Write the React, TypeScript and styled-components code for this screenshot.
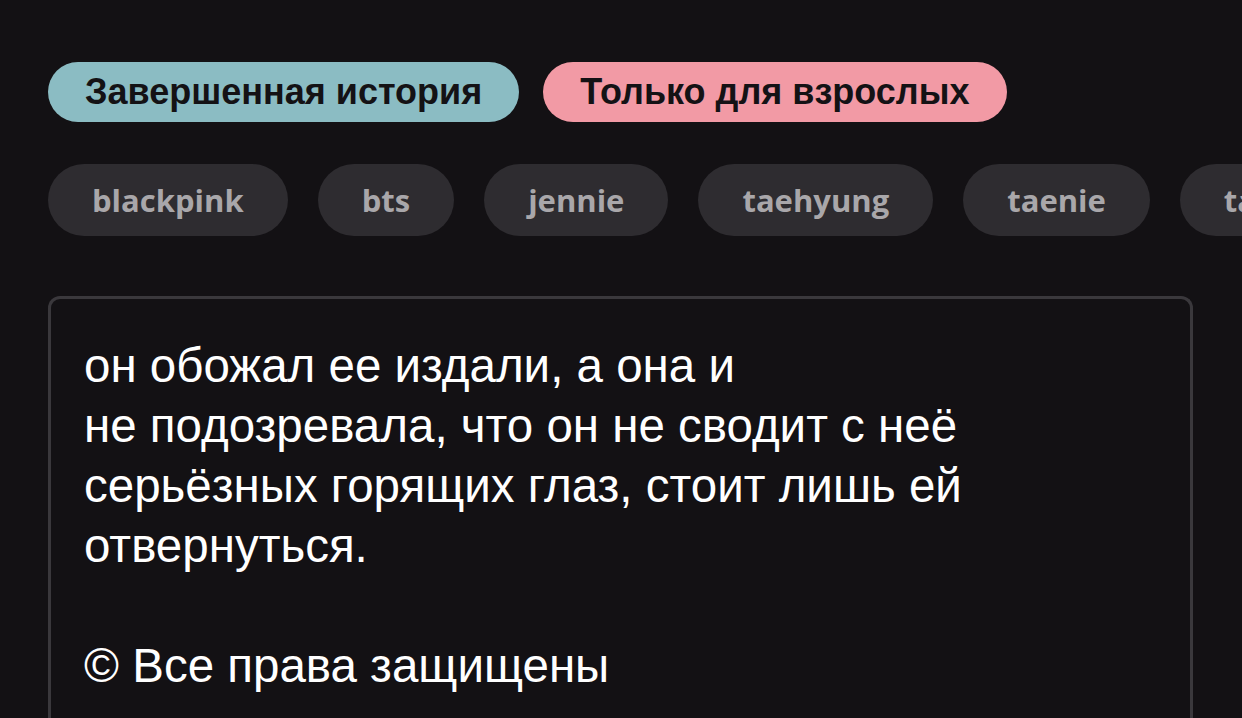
import React from 'react'
import styled, {createGlobalStyle} from "styled-components";

const GlobalStyle = createGlobalStyle`
  html, body {
    margin: 0;
    padding: 0;
    background: #131114;
    overflow: hidden;
  }
`
const Page = styled.div`
  width: 1242px;
  height: 718px;
  overflow: hidden;
  padding: 62px 0 0 48px;
  box-sizing: border-box;
  background: #131114;
`
const BadgeRow = styled.div`
  display: flex;
  gap: 24px;
`
const Badge = styled.div<{ $bg: string }>`
  height: 60px;
  padding: 0 37px;
  border-radius: 30px;
  background: ${p => p.$bg};
  color: #141215;
  font-family: "Liberation Sans", Arial, sans-serif;
  font-weight: 700;
  font-size: 36px;
  display: flex;
  align-items: center;
  white-space: nowrap;
`
const TagRow = styled.div`
  display: flex;
  gap: 30px;
  margin-top: 42px;
  white-space: nowrap;
`
const Tag = styled.div`
  flex-shrink: 0;
  height: 72px;
  padding: 0 44px;
  border-radius: 36px;
  background: #2e2c30;
  color: #a9a7aa;
  font-family: "Open Sans", sans-serif;
  font-weight: 700;
  font-size: 31px;
  display: flex;
  align-items: center;
`
const Description = styled.div`
  margin-top: 60px;
  width: 1145px;
  box-sizing: border-box;
  border: 3px solid #3a383c;
  border-bottom: none;
  border-radius: 12px 12px 0 0;
  padding: 37px 33px;
  color: #ffffff;
  font-family: "Liberation Sans", Arial, sans-serif;
  font-size: 47.5px;
  line-height: 60px;
  white-space: pre-line;
`

const tags = ["blackpink", "bts", "jennie", "taehyung", "taenie", "taekook"]

const text = `он обожал ее издали, а она и
не подозревала, что он не сводит с неё
серьёзных горящих глаз, стоит лишь ей
отвернуться.

© Все права защищены`

const App = () => {
    return (
        <Page>
            <GlobalStyle/>
            <BadgeRow>
                <Badge $bg="#8bbcc3">Завершенная история</Badge>
                <Badge $bg="#f29aa5">Только для взрослых</Badge>
            </BadgeRow>
            <TagRow>
                {tags.map(tag => <Tag key={tag}>{tag}</Tag>)}
            </TagRow>
            <Description>{text}</Description>
        </Page>
    )
}

export default App
